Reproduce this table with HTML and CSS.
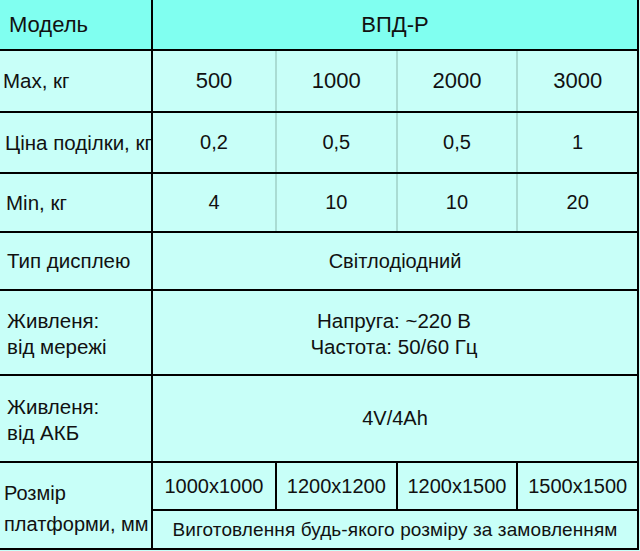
FILE: index.html
```html
<!DOCTYPE html>
<html lang="uk">
<head>
<meta charset="utf-8">
<title>ВПД-Р</title>
<link rel="stylesheet" href="styles.css">
</head>
<body>
<div class="table">
  <div class="row head">
    <div class="label">Модель</div>
    <div class="cell big">ВПД-Р</div>
  </div>
  <div class="row r-max">
    <div class="label">Max, кг</div>
    <div class="quad soft">
      <div class="cell big">500</div>
      <div class="cell big">1000</div>
      <div class="cell big">2000</div>
      <div class="cell big">3000</div>
    </div>
  </div>
  <div class="row r-div">
    <div class="label">Ціна поділки, кг</div>
    <div class="quad soft">
      <div class="cell">0,2</div>
      <div class="cell">0,5</div>
      <div class="cell">0,5</div>
      <div class="cell">1</div>
    </div>
  </div>
  <div class="row r-min">
    <div class="label">Min, кг</div>
    <div class="quad soft">
      <div class="cell">4</div>
      <div class="cell">10</div>
      <div class="cell">10</div>
      <div class="cell">20</div>
    </div>
  </div>
  <div class="row r-disp">
    <div class="label">Тип дисплею</div>
    <div class="cell">Світлодіодний</div>
  </div>
  <div class="row r-net">
    <div class="label multi">Живленя:<br>від мережі</div>
    <div class="cell multi">Напруга: ~220 В<br>Частота: 50/60 Гц</div>
  </div>
  <div class="row r-bat">
    <div class="label multi">Живленя:<br>від АКБ</div>
    <div class="cell">4V/4Ah</div>
  </div>
  <div class="row r-plat">
    <div class="label plat">Розмір<br>платформи, мм</div>
    <div class="stack">
      <div class="quad hard">
        <div class="cell">1000x1000</div>
        <div class="cell">1200x1200</div>
        <div class="cell">1200x1500</div>
        <div class="cell">1500x1500</div>
      </div>
      <div class="cell note">Виготовлення будь-якого розміру за замовленням</div>
    </div>
  </div>
</div>
</body>
</html>
```

FILE: styles.css
```css
html, body {
  margin: 0;
  padding: 0;
  background: #c8fff8;
}
body {
  width: 640px;
  height: 551px;
  overflow: hidden;
  font-family: "Liberation Sans", Arial, sans-serif;
  color: #111;
}
.table {
  width: 637px;
  display: flex;
  flex-direction: column;
  gap: 2px;
  background: #000;
  border-right: 2px solid #000;
  border-bottom: 2px solid #000;
}
.row {
  display: grid;
  grid-template-columns: 151px 1fr;
  column-gap: 2px;
  background: #000;
}
.label, .cell {
  background: #c8fff8;
  display: flex;
  align-items: center;
  font-size: 20px;
}
.label {
  padding-left: 5px;
  white-space: nowrap;
  overflow: hidden;
  font-size: 20.5px;
}
.cell {
  justify-content: center;
  text-align: center;
  white-space: nowrap;
}
.big {
  font-size: 22px;
}
.head .label, .head .cell {
  background: #80fff0;
}
.head .label {
  font-size: 22px;
  padding-left: 9px;
}
.head { height: 49px; }
.r-max { height: 60px; }
.r-max .label { padding-left: 3px; }
.r-div { height: 59px; }
.r-min { height: 57px; }
.r-disp { height: 56px; }
.r-net { height: 83px; }
.r-bat { height: 85px; }
.r-plat { height: 85px; }
.multi {
  line-height: 26px;
  padding-top: 2px;
}
.cell.multi { font-size: 20.5px; padding-right: 2px; }
.label.multi { padding-left: 7px; }
.r-disp .label { padding-left: 7px; }
.r-min .label { padding-left: 6px; }
.label.plat {
  font-size: 20px;
  line-height: 31px;
  padding-left: 4px;
  padding-top: 7px;
}
.quad {
  display: grid;
  grid-template-columns: 122px 1fr 1fr 1fr;
  column-gap: 2px;
}
.quad.soft { background: #a9dcd3; }
.quad.hard { background: #000; }
.stack {
  display: grid;
  grid-template-rows: 46px 1fr;
  row-gap: 2px;
  background: #000;
}
.note {
  font-size: 19px;
  letter-spacing: 0.1px;
}
```
